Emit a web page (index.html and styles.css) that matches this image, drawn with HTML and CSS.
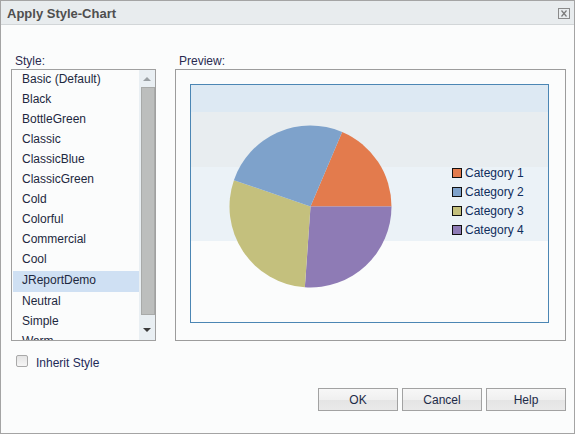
FILE: index.html
```html
<!DOCTYPE html>
<html>
<head>
<meta charset="utf-8">
<link rel="stylesheet" href="styles.css">
</head>
<body>
<div class="dialog">
  <div class="titlebar">
    <span class="title">Apply Style-Chart</span>
    <span class="close"><svg width="12" height="11" viewBox="0 0 12 11"><rect x="0.5" y="0.5" width="11" height="10" fill="none" stroke="#8a8a8a"/><path d="M3.5 2.5 L8.5 8.5 M8.5 2.5 L3.5 8.5" stroke="#7a7a7a" stroke-width="1.2"/></svg></span>
  </div>
  <div class="content">
    <div class="columns">
      <div class="col-left">
        <div class="label">Style:</div>
        <div class="listbox">
          <div class="items">
            <div class="item">Basic (Default)</div>
            <div class="item">Black</div>
            <div class="item">BottleGreen</div>
            <div class="item">Classic</div>
            <div class="item">ClassicBlue</div>
            <div class="item">ClassicGreen</div>
            <div class="item">Cold</div>
            <div class="item">Colorful</div>
            <div class="item">Commercial</div>
            <div class="item">Cool</div>
            <div class="item selected">JReportDemo</div>
            <div class="item">Neutral</div>
            <div class="item">Simple</div>
            <div class="item">Warm</div>
          </div>
          <div class="scrollbar">
            <div class="arrow up"></div>
            <div class="thumb"></div>
            <div class="arrow down"></div>
          </div>
        </div>
      </div>
      <div class="col-right">
        <div class="label">Preview:</div>
        <div class="preview">
          <div class="plot">
            <svg class="chart" width="357" height="237" viewBox="0 0 357 237">
              <rect x="0" y="0" width="357" height="27" fill="#dde9f3"/>
              <rect x="0" y="27" width="357" height="55" fill="#e8edf0"/>
              <rect x="0" y="82" width="357" height="74" fill="#ebf2f7"/>
              <g>
                <path d="M119.5 121.5 L151.15 46.94 A81 81 0 0 1 200.5 121.5 Z" fill="#e37b4d"/>
                <path d="M119.5 121.5 L200.5 121.5 A81 81 0 0 1 113.85 202.3 Z" fill="#8e7bb5"/>
                <path d="M119.5 121.5 L113.85 202.3 A81 81 0 0 1 42.91 95.13 Z" fill="#c4c07d"/>
                <path d="M119.5 121.5 L42.91 95.13 A81 81 0 0 1 151.15 46.94 Z" fill="#7ea2cb"/>
              </g>
              <g stroke="#111" stroke-width="1">
                <rect x="261.5" y="83.5" width="9" height="9" fill="#e37b4d"/>
                <rect x="261.5" y="102.5" width="9" height="9" fill="#7ea2cb"/>
                <rect x="261.5" y="121.5" width="9" height="9" fill="#c4c07d"/>
                <rect x="261.5" y="140.5" width="9" height="9" fill="#8e7bb5"/>
              </g>
              <g class="legend-text">
                <text x="274" y="92">Category 1</text>
                <text x="274" y="111">Category 2</text>
                <text x="274" y="130">Category 3</text>
                <text x="274" y="149">Category 4</text>
              </g>
            </svg>
          </div>
        </div>
      </div>
    </div>
    <label class="check-row">
      <span class="checkbox"></span>
      <span class="check-label">Inherit Style</span>
    </label>
    <div class="buttons">
      <button class="btn">OK</button>
      <button class="btn">Cancel</button>
      <button class="btn">Help</button>
    </div>
  </div>
</div>
</body>
</html>
```

FILE: styles.css
```css
* { box-sizing: border-box; }
html, body { margin: 0; padding: 0; background: #ffffff; }
body {
  font-family: "Liberation Sans", Arial, sans-serif;
  font-size: 12px;
  color: #1d2840;
}
.dialog {
  width: 575px;
  height: 434px;
  border: 1px solid #a4a4a4;
  background: #fbfcfc;
  display: flex;
  flex-direction: column;
}
.titlebar {
  height: 24px;
  background: #e8ecee;
  border-bottom: 1px solid #d2d6d8;
  display: flex;
  align-items: center;
  justify-content: space-between;
  padding: 0 4px 0 6px;
}
.title {
  font-weight: bold;
  font-size: 13px;
  color: #4f4f4f;
  margin-top: 1px;
}
.close { display: flex; margin-top: 1px; }
.content {
  flex: 1;
  display: flex;
  flex-direction: column;
  padding: 28px 8px 0 10px;
}
.columns {
  display: flex;
  gap: 19px;
}
.col-left { width: 145px; }
.col-right { width: 391px; }
.label {
  height: 16px;
  line-height: 16px;
  padding-left: 4px;
  color: #2a2a50;
}
.listbox {
  height: 272px;
  border: 1px solid #a0a0a0;
  background: #fbfcfc;
  display: flex;
  overflow: hidden;
}
.items {
  width: 127px;
  overflow: hidden;
  padding-top: 1px;
}
.item {
  height: 20px;
  line-height: 16px;
  padding: 0 0 4px 9px;
  margin-left: 1px;
  color: #1d2840;
  white-space: nowrap;
}
.item.selected {
  background: #cfe0f3;
  height: 21px;
  padding-top: 1px;
  margin-bottom: 1px;
}
.scrollbar {
  width: 16px;
  background: #e9eff3;
  display: flex;
  flex-direction: column;
  align-items: center;
  padding-top: 7px;
}
.arrow {
  width: 0; height: 0;
  border-left: 4px solid transparent;
  border-right: 4px solid transparent;
}
.arrow.up { border-bottom: 4px solid #9aa0a4; }
.arrow.down { border-top: 4px solid #3c3c3c; margin-top: 13px; }
.thumb {
  width: 14px;
  height: 228px;
  margin-top: 6px;
  margin-left: 1px;
  background: #bcbebd;
  border: 1px solid #a8aaa9;
}
.preview {
  height: 272px;
  border: 1px solid #9c9c9c;
  background: #fbfcfc;
  padding: 14px 15px 0 14px;
}
.plot {
  width: 359px;
  height: 239px;
  border: 1px solid #4b86b4;
  background: #fbfcfc;
}
.chart { display: block; }
.legend-text text {
  font-family: "Liberation Sans", Arial, sans-serif;
  font-size: 12px;
  fill: #0f2d5c;
}
.check-row {
  display: flex;
  align-items: center;
  margin-top: 13px;
  margin-left: 5px;
  height: 14px;
}
.checkbox {
  width: 12px;
  height: 12px;
  border: 1px solid #a9a9a9;
  border-radius: 2px;
  background: linear-gradient(#e4e4e4, #f6f6f6);
}
.check-label {
  margin-left: 8px;
  color: #1d2a58;
  padding-top: 4px;
}
.buttons {
  display: flex;
  justify-content: flex-end;
  gap: 4px;
  margin-top: 20px;
}
.btn {
  width: 80px;
  height: 23px;
  border: 1px solid #a2a2a2;
  background: linear-gradient(#f7f7f7 0%, #f0f0f0 50%, #e4e4e4 51%, #e9e9e9 100%);
  font-family: "Liberation Sans", Arial, sans-serif;
  font-size: 12px;
  color: #1d2a48;
  padding: 0;
}
```
